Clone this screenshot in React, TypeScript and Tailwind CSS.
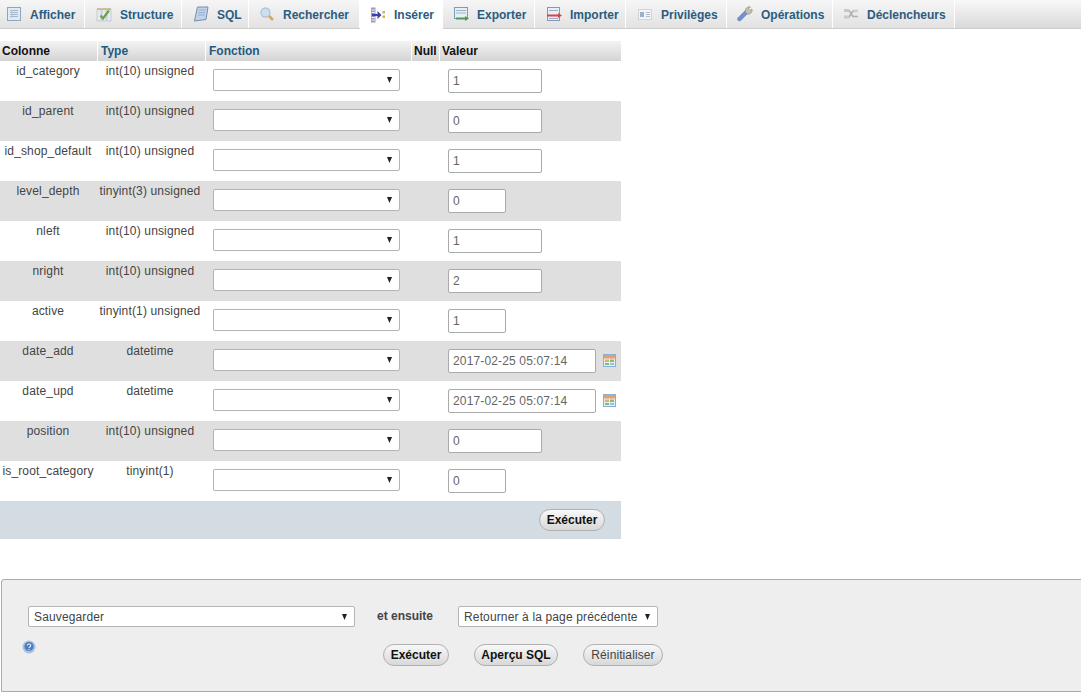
import type { ReactNode } from 'react';

const font = "font-['Liberation_Sans',Arial,sans-serif]";

const IconAfficher = () => (
  <svg width="16" height="16" viewBox="0 0 16 16">
    <rect x="1.500" y="1.500" width="13" height="13" fill="#e3e9f1" stroke="#8ea5c2" />
    <path d="M4 4.500h8M4 6.500h8M4 8.500h8M4 10.500h8" stroke="#a3b6ce" />
    <path d="M6 4v8" stroke="#b8c6d8" />
  </svg>
);

const IconStructure = () => (
  <svg width="16" height="16" viewBox="0 0 16 16">
    <path d="M1 3h4v12H1zM6 3h4v12H6zM11 3h4v12h-4z" fill="#e6ebf0" stroke="#b4bfcb" strokeWidth=".7" />
    <path d="M1 3h14" stroke="#c9a96a" strokeWidth="1.200" />
    <path d="M4.500 9.500l2.500 3 6-8" fill="none" stroke="#6da24a" strokeWidth="2.200" />
  </svg>
);

const IconSql = () => (
  <svg width="16" height="16" viewBox="0 0 16 16">
    <path d="M4.500 1h10.500l-2 12.500-11.500 1.500z" fill="#c3d2e6" stroke="#6e8db6" />
    <path d="M6 4h6.500M5.500 6.500h6.500M5 9h6.500" stroke="#97aecc" />
  </svg>
);

const IconSearch = () => (
  <svg width="16" height="16" viewBox="0 0 16 16">
    <circle cx="6.500" cy="6.500" r="4.500" fill="#c9dff3" stroke="#b4c2cf" strokeWidth="1.300" />
    <path d="M10 10l4 4" stroke="#d0a868" strokeWidth="2.600" />
  </svg>
);

const IconInsert = () => (
  <svg width="16" height="16" viewBox="0 0 16 16">
    <path d="M1 .5h4.500v15H1z" fill="#9a9cba" />
    <path d="M1.500 3h3.500M1.500 5.500h3.500M1.500 10.500h3.500M1.500 13h3.500" stroke="#eeeef5" />
    <path d="M2 8h7" stroke="#3d40b0" strokeWidth="2.200" />
    <path d="M7.500 4l4 4-4 4z" fill="#3d40b0" />
    <rect x="12.500" y="4" width="2.500" height="2.500" fill="#d8b13a" />
    <rect x="12.500" y="8.500" width="2.500" height="2.500" fill="#d8b13a" />
  </svg>
);

const IconExport = () => (
  <svg width="16" height="16" viewBox="0 0 16 16">
    <rect x="1.500" y="1.500" width="13" height="11" fill="#e7eef4" stroke="#7b9db4" />
    <path d="M3 4.500h10M3 7h10" stroke="#9ab7c9" />
    <path d="M3 12.500h10" stroke="#4b9a5c" strokeWidth="2" />
    <path d="M12 10l4 2.500-4 2.500z" fill="#4b9a5c" />
  </svg>
);

const IconImport = () => (
  <svg width="16" height="16" viewBox="0 0 16 16">
    <rect x="1.500" y="1.500" width="12" height="13" fill="#e8edf6" stroke="#8497b8" />
    <path d="M3 4.500h9M3 12.500h9" stroke="#9cadc9" />
    <path d="M1 9.500h12" stroke="#d8434a" strokeWidth="2" />
    <path d="M12 7l4 2.500-4 2.500z" fill="#d8434a" />
  </svg>
);

const IconPrivileges = () => (
  <svg width="16" height="16" viewBox="0 0 16 16">
    <rect x="1.500" y="3.500" width="13" height="10" fill="#f2f3f6" stroke="#d0d5dc" />
    <rect x="3" y="6" width="4" height="5" fill="#9cb0cc" />
    <path d="M9 6.500h4M9 8.500h4M9 10.500h4" stroke="#b5bec9" />
  </svg>
);

const IconWrench = () => (
  <svg width="16" height="16" viewBox="0 0 16 16">
    <path d="M2.500 13L9 6.500" stroke="#7191c8" strokeWidth="4.500" strokeLinecap="round" />
    <path d="M8.500 6a4 4 0 0 1 5-5l-2 2 1.500 1.500 2-1.500a4 4 0 0 1-5 5z" fill="#c4bfae" stroke="#96927f" strokeWidth=".7" />
  </svg>
);

const IconTrigger = () => (
  <svg width="16" height="16" viewBox="0 0 16 16">
    <path d="M1 4.500h5l4 6h5M1 11h5l4-6h5" fill="none" stroke="#b0b0b0" strokeWidth="1.600" />
    <rect x="1" y="3" width="5" height="3" fill="#c9c9c9" />
    <rect x="1" y="9.500" width="5" height="3" fill="#c9c9c9" />
    <rect x="11" y="3.500" width="4" height="3" fill="#d2d2d2" />
  </svg>
);

const IconCalendar = () => (
  <svg width="13" height="13" viewBox="0 0 13 13">
    <rect x=".5" y=".5" width="12" height="12" fill="#e4eef7" stroke="#86b0d8" />
    <rect x="1" y="1" width="11" height="3.500" fill="#e2a06a" />
    <rect x="2" y="5.500" width="4" height="2.500" fill="#e0b070" />
    <rect x="7" y="5.500" width="4" height="2.500" fill="#8dbb6c" />
    <rect x="2" y="9" width="4" height="2" fill="#8dbb6c" />
    <rect x="7" y="9" width="4" height="2" fill="#9cc0e0" />
  </svg>
);

const IconHelp = () => (
  <svg width="14" height="14" viewBox="0 0 14 14">
    <circle cx="7" cy="7" r="6.500" fill="#a8c0e2" />
    <circle cx="7" cy="6.500" r="4.600" fill="#4f7dbd" />
    <path d="M5.300 5.500a1.700 1.500 0 1 1 2.500 1.400c-.6.300-.8.600-.8 1.100" fill="none" stroke="#e8eef8" strokeWidth="1.100" />
    <rect x="6.400" y="9" width="1.200" height="1.200" fill="#e8eef8" />
  </svg>
);

const tabs: { label: string; icon: ReactNode; width: string; pad: string; active?: boolean }[] = [
  { label: 'Afficher', icon: <IconAfficher />, width: 'w-[85px]', pad: 'pl-[6px]' },
  { label: 'Structure', icon: <IconStructure />, width: 'w-[97px]', pad: 'pl-[11px]' },
  { label: 'SQL', icon: <IconSql />, width: 'w-[67px]', pad: 'pl-[11px]' },
  { label: 'Rechercher', icon: <IconSearch />, width: 'w-[111px]', pad: 'pl-[10px]' },
  { label: 'Insérer', icon: <IconInsert />, width: 'w-[83px]', pad: 'pl-[10px]', active: true },
  { label: 'Exporter', icon: <IconExport />, width: 'w-[92px]', pad: 'pl-[10px]' },
  { label: 'Importer', icon: <IconImport />, width: 'w-[91px]', pad: 'pl-[11px]' },
  { label: 'Privilèges', icon: <IconPrivileges />, width: 'w-[101px]', pad: 'pl-[11px]' },
  { label: 'Opérations', icon: <IconWrench />, width: 'w-[106px]', pad: 'pl-[10px]' },
  { label: 'Déclencheurs', icon: <IconTrigger />, width: 'w-[122px]', pad: 'pl-[10px]' },
];

const rows = [
  { name: 'id_category', type: 'int(10) unsigned', value: '1', size: 'w-[94px]' },
  { name: 'id_parent', type: 'int(10) unsigned', value: '0', size: 'w-[94px]' },
  { name: 'id_shop_default', type: 'int(10) unsigned', value: '1', size: 'w-[94px]' },
  { name: 'level_depth', type: 'tinyint(3) unsigned', value: '0', size: 'w-[58px]' },
  { name: 'nleft', type: 'int(10) unsigned', value: '1', size: 'w-[94px]' },
  { name: 'nright', type: 'int(10) unsigned', value: '2', size: 'w-[94px]' },
  { name: 'active', type: 'tinyint(1) unsigned', value: '1', size: 'w-[58px]' },
  { name: 'date_add', type: 'datetime', value: '2017-02-25 05:07:14', size: 'w-[148px]', calendar: true },
  { name: 'date_upd', type: 'datetime', value: '2017-02-25 05:07:14', size: 'w-[148px]', calendar: true },
  { name: 'position', type: 'int(10) unsigned', value: '0', size: 'w-[94px]' },
  { name: 'is_root_category', type: 'tinyint(1)', value: '0', size: 'w-[58px]' },
];

function Caret() {
  return (
    <svg width="5" height="6" viewBox="0 0 5 6" className="absolute right-[7px] top-1/2 -translate-y-1/2 pointer-events-none">
      <path d="M0 0h5L2.500 6z" fill="#222" />
    </svg>
  );
}

function FakeSelect({ className, text }: { className: string; text?: string }) {
  return (
    <div className={`relative bg-white border border-[#b4b4b4] rounded-[2px] ${className}`}>
      <div className="pl-[5px] leading-[20px] text-[12px] tracking-[0.14px] text-[#444] whitespace-nowrap">{text}</div>
      <Caret />
    </div>
  );
}

function PillButton({ label, className, light }: { label: string; className: string; light?: boolean }) {
  return (
    <button
      className={`h-[22px] rounded-[11px] border border-[#b0b0b0] bg-gradient-to-b from-[#f8f8f8] to-[#d8d8d8] text-[12px] leading-[18px] ${light ? 'font-normal tracking-[0.1px] text-[#444]' : 'font-bold text-[#111]'} ${className}`}
    >
      {label}
    </button>
  );
}

function HeadCell({ label, className, dark }: { label: string; className: string; dark?: boolean }) {
  return (
    <div className={`h-[20px] border-r border-white leading-[20px] font-bold text-[12px] ${dark ? 'text-[#111]' : 'text-[#235a81]'} ${className}`}>
      {label}
    </div>
  );
}

export default function App() {
  return (
    <div className={`min-h-[697px] bg-white overflow-hidden text-[12px] text-[#444] ${font}`}>
      {/* Tabs */}
      <div className="flex h-[29px] border-b border-[#ccc] bg-gradient-to-b from-[#f8f8f8] to-[#d9d9d9]">
        {tabs.map((t) => (
          <div
            key={t.label}
            className={`${t.width} ${t.pad} flex items-center gap-[8px] border-r border-white font-bold text-[#2a5c80] ${t.active ? 'bg-white h-[29px]' : 'h-[28px] bg-gradient-to-b from-[#f6f6f6] to-[#e2e2e2]'}`}
          >
            {t.icon}
            <span className="pt-px">{t.label}</span>
          </div>
        ))}
      </div>

      {/* Insert table */}
      <div className="w-[621px] mt-[12px]">
        <div className="flex bg-gradient-to-b from-[#f3f3f3] to-[#d4d4d4]">
          <HeadCell label="Colonne" className="w-[98px] pl-[2px]" dark />
          <HeadCell label="Type" className="w-[108px] pl-[3px]" />
          <HeadCell label="Fonction" className="w-[206px] pl-[3px]" />
          <HeadCell label="Null" className="w-[28px] pl-[2px]" dark />
          <div className="flex-1 h-[20px] pl-[2px] leading-[20px] font-bold text-[#111]">Valeur</div>
        </div>
        {rows.map((r, i) => (
          <div key={r.name} className={`flex h-[40px] tracking-[0.15px] ${i % 2 === 1 ? 'bg-[#dfdfdf]' : 'bg-white'}`}>
            <div className="w-[96px] pt-px text-center whitespace-nowrap">{r.name}</div>
            <div className="w-[108px] pt-px text-center whitespace-nowrap">{r.type}</div>
            <div className="w-[210px] pt-[8px] pl-[9px]">
              <FakeSelect className="w-[187px] h-[22px]" />
            </div>
            <div className="w-[26px]" />
            <div className="flex-1 flex items-start gap-[7px] pt-[8px] pl-[8px]">
              <input
                readOnly
                value={r.value}
                className={`${r.size} h-[24px] px-[4px] bg-white border border-[#aaa] rounded-[2px] text-[12px] tracking-[0.15px] text-[#666] outline-none`}
              />
              {r.calendar && (
                <span className="mt-[5px]">
                  <IconCalendar />
                </span>
              )}
            </div>
          </div>
        ))}
        <div className="flex justify-end items-start h-[38px] pt-[8px] pr-[16px] bg-[#d3dce3]">
          <PillButton label="Exécuter" className="w-[66px]" />
        </div>
      </div>

      {/* Bottom fieldset */}
      <div className="ml-[1px] mt-[40px] h-[113px] -mr-[4px] pl-[26px] pt-[26px] bg-[#eeeeee] border border-[#aaa] rounded-tl-[3px]">
        <div className="flex items-start">
          <FakeSelect className="w-[327px] h-[21px]" text="Sauvegarder" />
          <span className="ml-[22px] font-bold leading-[20px]">et ensuite</span>
          <FakeSelect className="ml-[25px] w-[200px] h-[21px]" text="Retourner à la page précédente" />
        </div>
        <div className="flex items-start mt-[13px]">
          <span className="-ml-[6px]">
            <IconHelp />
          </span>
          <div className="ml-[347px] mt-[4px] flex gap-[25px]">
            <PillButton label="Exécuter" className="w-[66px]" />
            <PillButton label="Aperçu SQL" className="w-[84px]" />
            <PillButton label="Réinitialiser" className="w-[80px]" light />
          </div>
        </div>
      </div>
    </div>
  );
}
